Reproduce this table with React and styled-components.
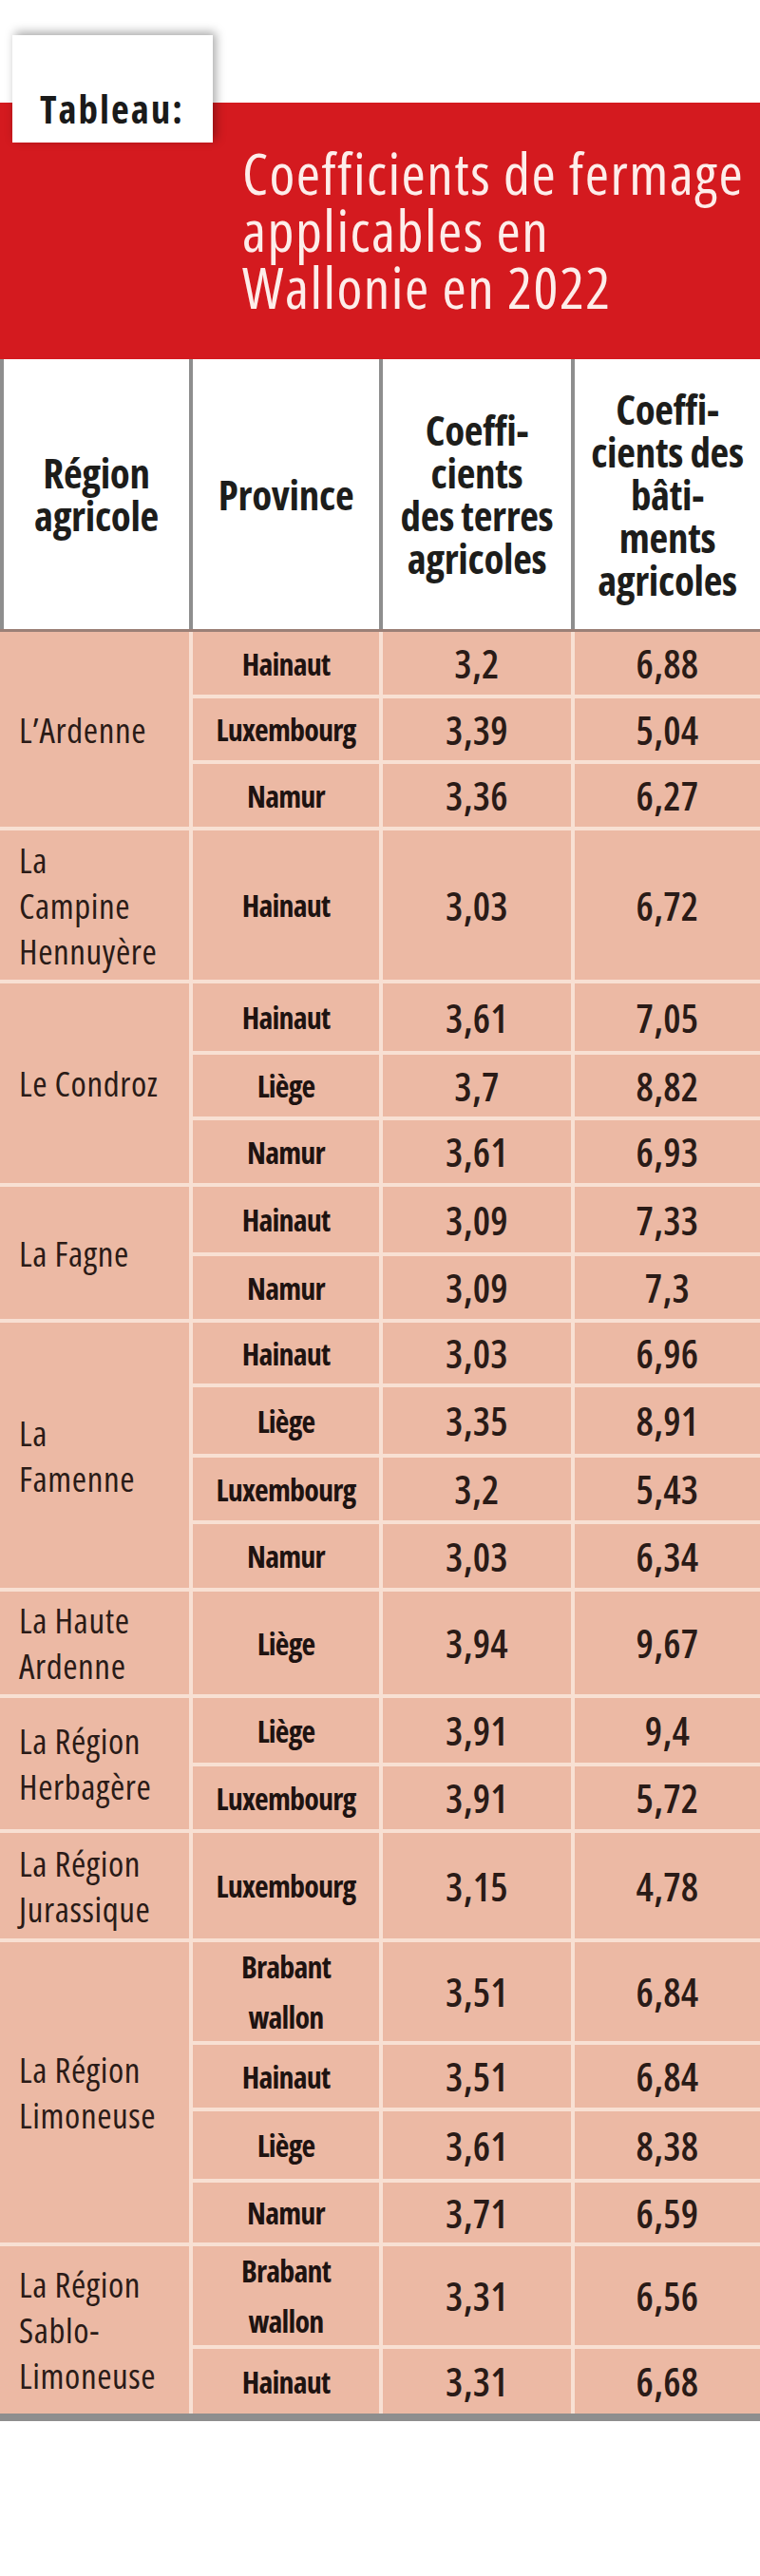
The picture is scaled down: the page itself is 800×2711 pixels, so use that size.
import React from "react";
import styled, { createGlobalStyle } from "styled-components";

const GlobalStyle = createGlobalStyle`
  html, body {
    margin: 0;
    padding: 0;
    background: #ffffff;
  }
  body {
    font-family: "Open Sans", "Noto Sans", sans-serif;
    font-stretch: 75%;
    color: #231815;
  }
  * { box-sizing: border-box; }
`;

const COLS = "203px 200px 202px 195px";
const SALMON = "#ECB9A4";
const LINE = "#F8E0D3";
const GREY = "#8E8E8E";

const Page = styled.div`
  width: 800px;
  min-height: 2711px;
  background: #ffffff;
`;

const Banner = styled.header`
  position: relative;
  padding-top: 108px;
`;

const Tag = styled.div`
  position: absolute;
  left: 13px;
  top: 37px;
  width: 211px;
  height: 113px;
  background: #ffffff;
  box-shadow: 3px -3px 10px rgba(0, 0, 0, 0.35);
  display: flex;
  align-items: flex-end;
  padding: 0 0 10px 29px;
  font-size: 41px;
  font-weight: 700;
  font-stretch: 75%;
  line-height: 52px;
  color: #1a1a1a;
  letter-spacing: 2px;
  z-index: 2;
`;

const RedBand = styled.div`
  height: 270px;
  background: #D41A1F;
  padding: 44px 0 0 255px;
`;

const Title = styled.h1`
  margin: 0;
  font-size: 61px;
  font-weight: 400;
  font-stretch: 75%;
  line-height: 60px;
  color: #FDEDEA;
  letter-spacing: 1.5px;
  white-space: nowrap;
`;

const HeadRow = styled.div`
  display: grid;
  grid-template-columns: ${COLS};
  height: 287px;
  border-bottom: 3px solid #9B8077;
  background: #ffffff;
`;

const HeadCell = styled.div`
  display: flex;
  align-items: center;
  justify-content: center;
  text-align: center;
  border-right: ${(p) => (p.$last ? "none" : `4px solid ${GREY}`)};
  border-left: ${(p) => (p.$first ? `4px solid ${GREY}` : "none")};
  font-size: 43px;
  font-weight: 700;
  font-stretch: 75%;
  line-height: 45px;
  letter-spacing: -0.3px;
  color: #1d1d1b;
`;

const Body = styled.div`
  display: grid;
  grid-template-columns: ${COLS};
  grid-template-rows: ${(p) => p.$rows};
  background: ${SALMON};
  border-bottom: 8px solid ${GREY};
`;

const Cell = styled.div`
  display: flex;
  align-items: center;
  border-right: ${(p) => (p.$edge ? "none" : `4px solid ${LINE}`)};
  border-bottom: ${(p) => (p.$last ? "none" : `4px solid ${LINE}`)};
`;

const RegionCell = styled(Cell)`
  grid-row: span ${(p) => p.$span};
  justify-content: flex-start;
  padding-left: 20px;
  font-size: 37px;
  font-weight: 500;
  font-stretch: 75%;
  line-height: 48px;
  letter-spacing: 0.6px;
  color: #2a1b17;
`;

const ProvinceCell = styled(Cell)`
  justify-content: center;
  text-align: center;
  font-size: 32px;
  font-weight: 700;
  font-stretch: 75%;
  line-height: 53px;
  letter-spacing: -0.8px;
  color: #1e1311;
`;

const ValueCell = styled(Cell)`
  justify-content: center;
  font-size: 41px;
  font-weight: 600;
  font-stretch: 75%;
  line-height: 48px;
  letter-spacing: 0.3px;
  color: #2a1b17;
`;

const Lines = ({ lines }) =>
  lines.map((l, i) => (
    <React.Fragment key={i}>
      {i > 0 && <br />}
      {l}
    </React.Fragment>
  ));

const groups = [
  {
    region: ["L’Ardenne"],
    rows: [
      [["Hainaut"], "3,2", "6,88", 70],
      [["Luxembourg"], "3,39", "5,04", 69],
      [["Namur"], "3,36", "6,27", 70],
    ],
  },
  {
    region: ["La", "Campine", "Hennuyère"],
    rows: [[["Hainaut"], "3,03", "6,72", 161]],
  },
  {
    region: ["Le Condroz"],
    rows: [
      [["Hainaut"], "3,61", "7,05", 75],
      [["Liège"], "3,7", "8,82", 69],
      [["Namur"], "3,61", "6,93", 70],
    ],
  },
  {
    region: ["La Fagne"],
    rows: [
      [["Hainaut"], "3,09", "7,33", 73],
      [["Namur"], "3,09", "7,3", 70],
    ],
  },
  {
    region: ["La", "Famenne"],
    rows: [
      [["Hainaut"], "3,03", "6,96", 68],
      [["Liège"], "3,35", "8,91", 74],
      [["Luxembourg"], "3,2", "5,43", 70],
      [["Namur"], "3,03", "6,34", 71],
    ],
  },
  {
    region: ["La Haute", "Ardenne"],
    rows: [[["Liège"], "3,94", "9,67", 112]],
  },
  {
    region: ["La Région", "Herbagère"],
    rows: [
      [["Liège"], "3,91", "9,4", 72],
      [["Luxembourg"], "3,91", "5,72", 70],
    ],
  },
  {
    region: ["La Région", "Jurassique"],
    rows: [[["Luxembourg"], "3,15", "4,78", 115]],
  },
  {
    region: ["La Région", "Limoneuse"],
    rows: [
      [["Brabant", "wallon"], "3,51", "6,84", 108],
      [["Hainaut"], "3,51", "6,84", 70],
      [["Liège"], "3,61", "8,38", 75],
      [["Namur"], "3,71", "6,59", 67],
    ],
  },
  {
    region: ["La Région", "Sablo-", "Limoneuse"],
    rows: [
      [["Brabant", "wallon"], "3,31", "6,56", 108],
      [["Hainaut"], "3,31", "6,68", 68],
    ],
  },
];

const headers = [
  ["Région", "agricole"],
  ["Province"],
  ["Coeffi-", "cients", "des terres", "agricoles"],
  ["Coeffi-", "cients des", "bâti-", "ments", "agricoles"],
];

export default function App() {
  const rowHeights = groups
    .flatMap((g) => g.rows.map((r) => `${r[3]}px`))
    .join(" ");

  return (
    <Page>
      <GlobalStyle />
      <Banner>
        <Tag>Tableau:</Tag>
        <RedBand>
          <Title>
            Coefficients de fermage
            <br />
            applicables en
            <br />
            Wallonie en 2022
          </Title>
        </RedBand>
      </Banner>

      <HeadRow>
        {headers.map((h, i) => (
          <HeadCell key={i} $first={i === 0} $last={i === headers.length - 1}>
            <div>
              <Lines lines={h} />
            </div>
          </HeadCell>
        ))}
      </HeadRow>

      <Body $rows={rowHeights}>
        {groups.map((g, gi) => {
          const lastGroup = gi === groups.length - 1;
          return (
            <React.Fragment key={gi}>
              <RegionCell $span={g.rows.length} $last={lastGroup}>
                <div>
                  <Lines lines={g.region} />
                </div>
              </RegionCell>
              {g.rows.map((r, ri) => {
                const last = lastGroup && ri === g.rows.length - 1;
                return (
                  <React.Fragment key={ri}>
                    <ProvinceCell $last={last}>
                      <div>
                        <Lines lines={r[0]} />
                      </div>
                    </ProvinceCell>
                    <ValueCell $last={last}>{r[1]}</ValueCell>
                    <ValueCell $last={last} $edge>
                      {r[2]}
                    </ValueCell>
                  </React.Fragment>
                );
              })}
            </React.Fragment>
          );
        })}
      </Body>
    </Page>
  );
}
